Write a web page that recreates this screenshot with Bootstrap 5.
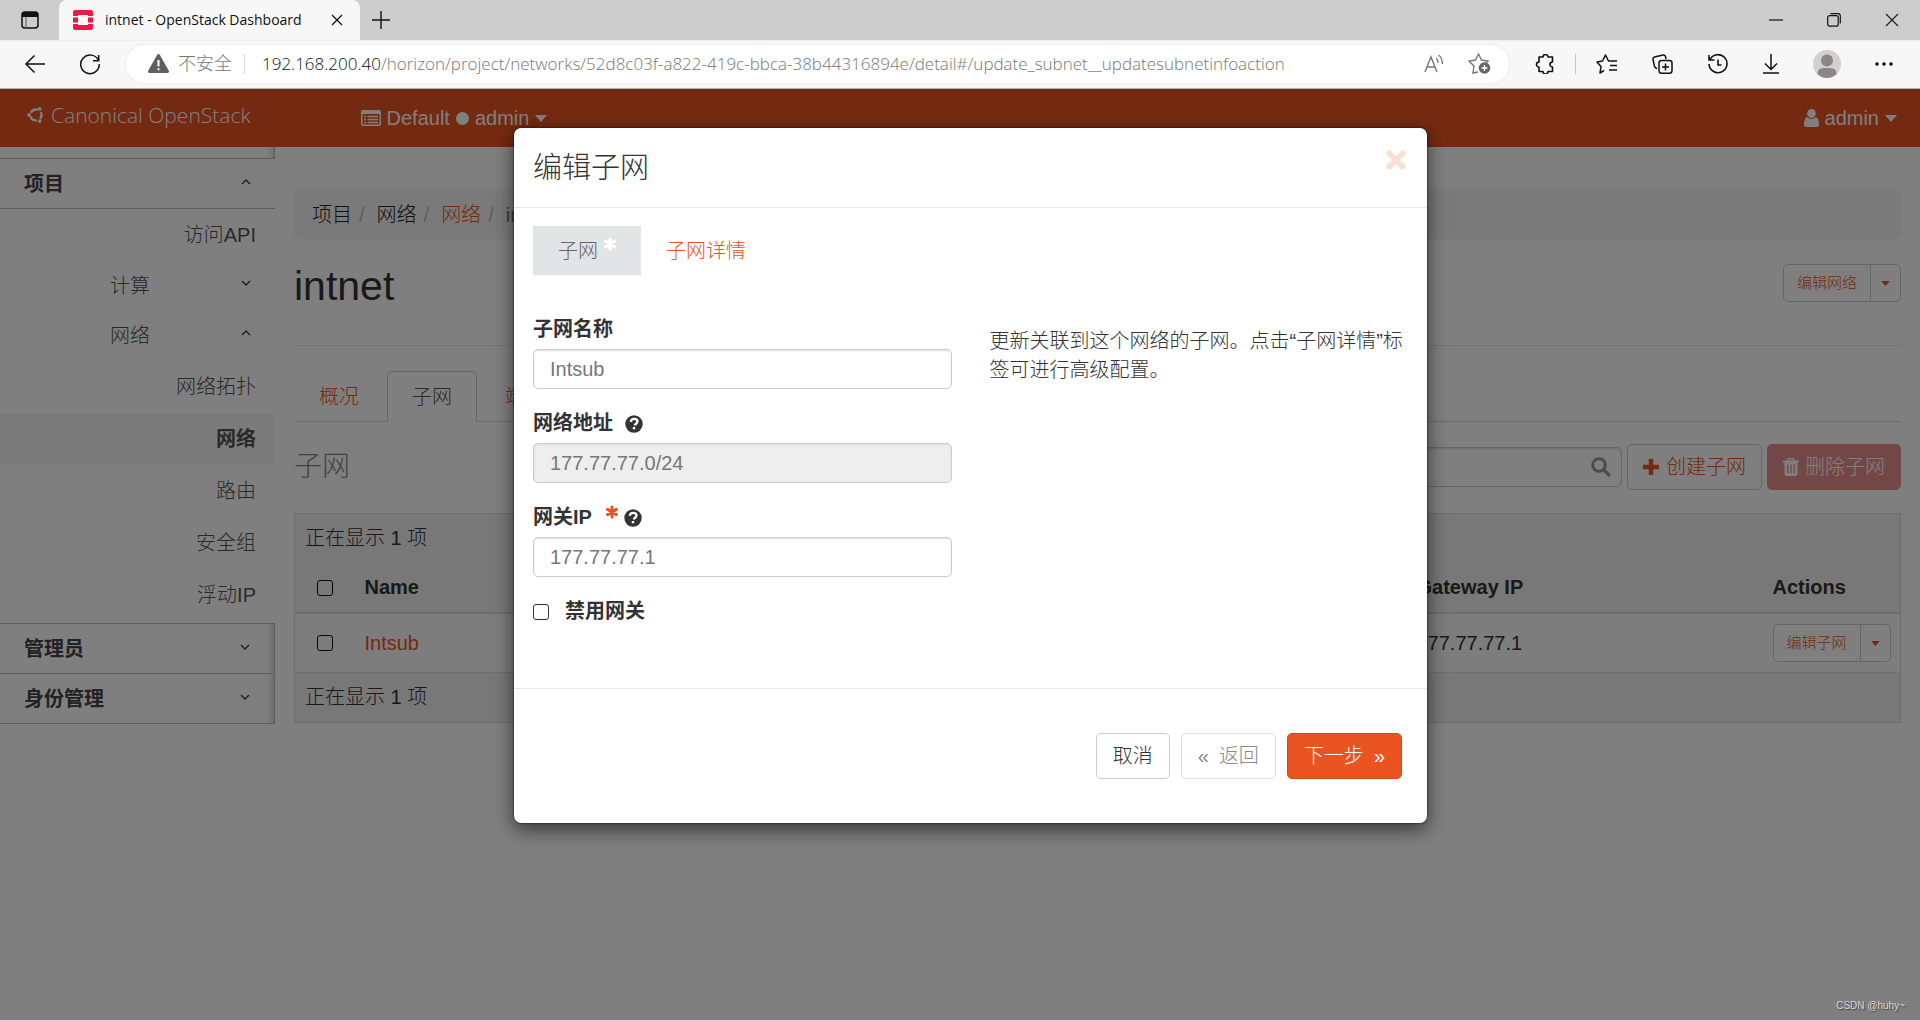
<!DOCTYPE html>
<html lang="zh-CN">
<head>
<meta charset="utf-8">
<meta name="viewport" content="width=device-width, initial-scale=1">
<title>intnet - OpenStack Dashboard</title>
<link href="https://cdn.jsdelivr.net/npm/bootstrap@5.3.0/dist/css/bootstrap.min.css" rel="stylesheet">
<style>
:root{--brand:#e95420;--line:#ccc}
html,body{height:100%}
body{font-family:"Liberation Sans","Noto Sans CJK SC",sans-serif;font-size:20px;line-height:29px;color:#333;font-weight:300;overflow:hidden}
a{text-decoration:none;color:var(--brand)}
svg{display:block;flex:none}
.ui-font{font-family:"Open Sans","Noto Sans CJK SC",sans-serif}
/* browser frame */
.tab-strip{background:#cdcdcd;height:40px}
.win-tab{background:#f7f7f7;width:301px;border-radius:8px 8px 0 0;font-size:14px;color:#111;font-weight:400;padding:0 15px 0 14px}
.win-tab span{padding-bottom:2px}
.frame-btn{border:0;background:none;padding:0;color:#111;display:flex}
.tab-menu{padding:0 20px 0 21px}
.win-controls{gap:44px;padding-right:21px}
.tool-row{background:#f7f7f7;height:49px;border-bottom:1px solid #b5b5b5;border-top:1px solid #eee;padding:0 27px 2px 24px}
.reload-btn{margin-left:33px}
.address{background:#fff;border-radius:19px;height:38px;margin-left:25px;padding:0 18px 0 22px;font-size:17px;color:#767676;box-shadow:0 0 3px #e4e4e4}
.insecure{font-size:18px;margin:0 12px 0 9px}
.address .vr{height:20px;margin-right:17px}
.star-plus{margin-left:24px}
.url b{font-weight:300;color:#111}
.tools{width:384px;padding-left:26px}
.tools .vr,.address .vr{align-self:center}
.tools .vr{height:20px}
.tools-lead{gap:20px}
/* dashboard */
.stage{border-bottom:1px solid #d5d8e2}
.top-nav{background:var(--brand);height:58px;color:#fff;padding:0 23px 0 27px}
.top-nav a{color:#fff}
.brand-text{font-size:21px;line-height:28px;padding-bottom:7px;gap:7px}
.project-pick{margin-left:110px;gap:6px}
.user-menu{gap:6px}
.side{width:275px;flex:none}
.side ul{padding-bottom:2px}
.side-head{height:49px;padding:2px 24px 0;font-weight:700;border-bottom:1px solid #bbb;color:#444;box-sizing:border-box;min-height:50px}
.side-head svg,.side-group svg{margin-bottom:6px}
.side-closed{border-right:1px solid #bbb;box-shadow:inset -7px 0 7px -5px #ccc}
.side-link{height:52px;display:flex;align-items:center;justify-content:flex-end;padding-right:19px;color:#555}
.side-link.current{background:#f6f6f6;font-weight:700}
.side-group{height:50px;padding:0 24px 0 110px;color:#555}
.side-top{height:12px;border-bottom:1px solid #bbb}
.side-rest{border-top:1px solid #bbb}
.main-col{padding:42px 19px 0}
.crumbs{background:#f5f5f5;border-radius:5px;height:50px;padding:2px 18px 0;color:#222}
.crumbs li+li::before{content:"/";color:#bbb;padding:0 12px 0 7px}
.page-title{font-size:41px;line-height:44px;color:#333;font-weight:400}
.title-row{height:107px;padding-top:25px;border-bottom:1px solid #e8e8e8}
.outline-btn{--bs-btn-font-weight:300;border:1px solid var(--line);color:var(--brand);background:#fff;border-radius:5px;font-size:20px;line-height:28px;padding:8px 15px;display:flex;align-items:center;gap:6px;white-space:nowrap}
.create-btn{gap:7px;margin:0 5px}
.small-btn{font-size:15px;line-height:22px;padding:7px 13px}
.small-btn.caret-btn{padding:7px 10px}
.page-tabs{margin-top:25px;border-color:#ddd}
.page-tabs .nav-link{color:var(--brand);padding:11px 24px 9px;line-height:29px;border-radius:5px 5px 0 0;margin-right:3px}
.page-tabs .nav-link.active{color:#555;border-color:#ccc #ccc #fff}
.list-title{font-size:28px;color:#888;line-height:40px}
.tools-row{margin-top:22px;height:46px}
.search-box{width:360px;height:40px;border:1px solid var(--line);border-radius:5px;padding:0 10px;box-shadow:inset 0 1px 2px #ddd}
.search-box input{border:0;outline:0;background:none}
.danger-btn{background:#e78f8c;border-color:#e78f8c;color:#fff}
.net-table{margin:23px 0 0;border:1px solid #ddd;table-layout:fixed;--bs-table-color:#333;color:#333;--bs-table-bg:transparent}
.net-table>:not(caption)>*>*{padding:10px;border-bottom:0;line-height:29px;vertical-align:middle}
.net-table thead,.net-table tfoot{background:#f0f0f0}
.net-table tbody{background:#fafafa;border-top:2px solid #ddd;border-bottom:1px solid #ddd}
.c-check{width:60px}.c-gate{width:356px}.c-act{width:138px}
.net-table .btn-group{display:flex;width:118px}
.box{width:16px;height:16px;margin:0;border:1px solid #333;border-radius:3px;display:block;flex:none;appearance:none;background:#fff}
.net-table .box{margin-left:12px;background:transparent;border-color:#111}
.shade{background:rgba(0,0,0,.5)}
/* dialog */
.dialog-layer{padding:39px 0 0 21px}
.dialog-box{background:#fff;width:913px;border:0;border-radius:7px;box-shadow:0 6px 20px rgba(0,0,0,.6),0 0 2px #000}
.dialog-head{height:80px;padding:0 21px 0 19px;border-bottom:1px solid #e5e5e5}
.dialog-head h2{font-size:29px;line-height:40px;font-weight:300;margin:0}
.dialog-main{padding:18px 19px 0;height:480px}
.step{height:49px;padding:1px 25px 0;display:flex;align-items:center;color:var(--brand)}
.step.on{background:#e2e4e6;color:#666;padding-right:24px;gap:5px}
.step svg{margin-bottom:14px;color:#fff}
.form-row{--bs-gutter-x:38px}
.left-col{padding-top:39px}
.left-col .group{margin-bottom:19px}
.left-col label{font-weight:700;line-height:31px;margin-bottom:4px}
.left-col .tick label{margin:0}
.help-gap{margin-left:12px}
.req{color:var(--brand);margin:0 5px 12px 13px}
.intro{padding-top:52px}
.field{height:40px;border:1px solid var(--line);border-radius:5px;padding:0 16px;color:#777;font-size:20px;box-shadow:inset 0 1px 2px #ddd;font-family:inherit}
.field:disabled{background:#eee}
.dialog-foot{border-top:1px solid #e5e5e5;padding:44px 25px;gap:11px}
.dialog-foot .outline-btn{color:#333;padding:8px 16px}
.dialog-foot .back-btn{color:#888;border-color:#ddd;gap:10px}
.dialog-foot .next-btn{background:var(--brand);border-color:#d9481a;color:#fff;gap:10px}
.watermark{right:15px;bottom:6px;font-size:10px;line-height:16px;color:#d8d8d8;text-shadow:1px 1px 1px #444}
</style>
</head>
<body class="d-flex flex-column">
<svg width="0" height="0" class="position-absolute" aria-hidden="true">
  <symbol id="up" viewBox="0 0 10 8"><path d="M1 6l4-4 4 4" fill="none" stroke="#444" stroke-width="1.5"/></symbol>
  <symbol id="down" viewBox="0 0 10 8"><path d="M1 2l4 4 4-4" fill="none" stroke="#444" stroke-width="1.5"/></symbol>
  <symbol id="caret" viewBox="0 0 12 7"><path d="M0 0h12L6 7z" fill="currentColor"/></symbol>
  <symbol id="star" viewBox="0 0 14 14"><path d="M7 2v10M2.500 4.400l9 5.200M11.500 4.400l-9 5.200" fill="none" stroke="currentColor" stroke-width="3" stroke-linecap="round"/></symbol>
  <symbol id="help" viewBox="0 0 18 18"><circle cx="9" cy="9" r="8.700" fill="#333"/><path d="M5.800 6.900C6 4.700 7.400 3.900 9.200 3.900c1.900 0 3.300 1.100 3.300 2.700 0 2.100-2.600 2.200-2.600 4" fill="none" stroke="#fff" stroke-width="2.300"/><path d="M7.800 12h2.400v2.300H7.800z" fill="#fff"/></symbol>
</svg>

<header class="ui-font">
  <div class="tab-strip d-flex align-items-stretch">
    <button class="frame-btn align-items-center tab-menu" aria-label="标签页菜单"><svg width="18" height="18" viewBox="0 0 18 18"><rect x="1" y="1" width="16" height="16" rx="3" fill="none" stroke="#111" stroke-width="1.500"/><path d="M1 6V3.500A2.500 2.500 0 0 1 3.500 1h11A2.500 2.500 0 0 1 17 3.500V6z" fill="#111"/><path d="M5 6v11" stroke="#555"/></svg></button>
    <div class="win-tab d-flex align-items-center">
      <svg width="20" height="20" viewBox="0 0 20 20"><path fill="#ed1944" d="M2 0h16a2 2 0 0 1 2 2v4h-5V5H5v1H0V2a2 2 0 0 1 2-2zM0 7.500h5v5H0zM15 7.500h5v5h-5zM0 14h5v1h10v-1h5v4a2 2 0 0 1-2 2H2a2 2 0 0 1-2-2z"/></svg>
      <span class="ms-2 ps-1 flex-fill text-nowrap">intnet - OpenStack Dashboard</span>
      <button class="frame-btn" aria-label="关闭标签页"><svg width="14" height="12" viewBox="0 0 14 12"><path d="M1 1l10 10M11 1L1 11" stroke="#111" stroke-width="1.300"/></svg></button>
    </div>
    <button class="frame-btn align-items-center ms-2 ps-1" aria-label="新标签页"><svg width="18" height="18" viewBox="0 0 18 18"><path d="M9 0v18M0 9h18" stroke="#111" stroke-width="1.400"/></svg></button>
    <div class="ms-auto d-flex align-items-center win-controls">
      <button class="frame-btn" aria-label="最小化"><svg width="14" height="14" viewBox="0 0 14 14"><path d="M0 7h14" stroke="#111" stroke-width="1.200"/></svg></button>
      <button class="frame-btn" aria-label="还原"><svg width="14" height="14" viewBox="0 0 14 14"><rect x=".7" y="2.700" width="10.500" height="10.500" rx="2" fill="none" stroke="#111" stroke-width="1.200"/><path d="M3.500 .7H11a2.300 2.300 0 0 1 2.300 2.300v7.500" fill="none" stroke="#111" stroke-width="1.200"/></svg></button>
      <button class="frame-btn" aria-label="关闭"><svg width="14" height="14" viewBox="0 0 14 14"><path d="M1 1l12 12M13 1L1 13" stroke="#222" stroke-width="1.200"/></svg></button>
    </div>
  </div>
  <div class="tool-row d-flex align-items-center">
    <button class="frame-btn" aria-label="后退"><svg width="22" height="20" viewBox="0 0 22 20"><path d="M21 10H2M10.500 1.500L2 10l8.500 8.500" fill="none" stroke="#111" stroke-width="1.500"/></svg></button>
    <button class="frame-btn reload-btn" aria-label="刷新"><svg width="22" height="22" viewBox="0 0 22 22"><path d="M19.500 7.500A9.300 9.300 0 1 0 20.300 11M19.700 2v5.700H14" fill="none" stroke="#111" stroke-width="1.500"/></svg></button>
    <div class="address d-flex align-items-center flex-fill">
      <svg width="21" height="19" viewBox="0 0 21 19"><path d="M10.500 0c.6 0 1 .3 1.300.8l9 16c.5 1-.1 2.200-1.300 2.200h-18C.3 19-.3 17.800.2 16.800l9-16c.3-.5.7-.8 1.300-.8z" fill="#5f5f5f"/><path d="M10.500 6v6.500M10.500 14.300v2" stroke="#fff" stroke-width="2"/></svg>
      <span class="insecure">不安全</span>
      <span class="vr"></span>
      <span class="flex-fill text-nowrap url"><b>192.168.200.40</b>/horizon/project/networks/52d8c03f-a822-419c-bbca-38b44316894e/detail#/update_subnet__updatesubnetinfoaction</span>
      <svg width="20" height="19" viewBox="0 0 20 19"><path d="M1 18L7 3l6 15M3 13h8" fill="none" stroke="#777" stroke-width="1.400"/><path d="M12 4q2 1.500 2 5M14.500 1q4 3 4 9" fill="none" stroke="#777" stroke-width="1.300"/></svg>
      <svg class="star-plus" width="23" height="21" viewBox="0 0 23 21"><path d="M10 19l-5 1 1-7-5-5 6.500-1L10.500 1l3 6 6.500 1-2 2" fill="none" stroke="#777" stroke-width="1.400"/><circle cx="16.500" cy="15" r="5.800" fill="#666"/><path d="M16.500 12v6M13.500 15h6" stroke="#fff" stroke-width="1.400"/></svg>
    </div>
    <div class="tools d-flex align-items-center justify-content-between">
      <div class="tools-lead d-flex align-items-center">
      <svg width="20" height="20" viewBox="0 0 20 20"><path d="M4 3h4a2.500 2.500 0 0 1 5 0h4.500v5a2.500 2.500 0 0 0 0 5v4.500H13a2.500 2.500 0 0 1-5 0H4V13a2.500 2.500 0 0 1 0-5z" fill="none" stroke="#111" stroke-width="1.600" stroke-linejoin="round"/></svg>
      <span class="vr"></span>
      <svg width="22" height="20" viewBox="0 0 22 20"><path d="M8 16.500L4 19l1-6.500L1 8l5.500-1L9.500 1l3 6H21M14 11.500h7M13 16h8" fill="none" stroke="#111" stroke-width="1.500" stroke-linejoin="round"/></svg>
      </div>
      <svg width="21" height="20" viewBox="0 0 21 20"><path d="M5 14.500q-2-.5-2.600-2.500L1 5.500Q.8 3.600 2.500 3L11 1q2-.2 2.500 1.500L14 5" fill="none" stroke="#111" stroke-width="1.500"/><rect x="7" y="6.500" width="13" height="12.800" rx="2.500" fill="none" stroke="#111" stroke-width="1.500"/><path d="M13.500 9.500v7M10 13h7" stroke="#111" stroke-width="1.500"/></svg>
      <svg width="22" height="20" viewBox="0 0 22 20"><path d="M3 5.500A9 9 0 1 1 2 10M2 1v5h5.500M11 5.500V11h3.500" fill="none" stroke="#111" stroke-width="1.600"/></svg>
      <svg width="16" height="20" viewBox="0 0 16 20"><path d="M8 0v15M2 9.500l6 6 6-6M0 19h16" fill="none" stroke="#111" stroke-width="1.500"/></svg>
      <svg width="28" height="28" viewBox="0 0 28 28"><circle cx="14" cy="14" r="14" fill="#d3d1cf"/><circle cx="14" cy="10.500" r="6" fill="#8a8785"/><path d="M4.500 24q0-6 6-6h7q6 0 6 6-4 4-9.500 4t-9.500-4z" fill="#8a8785"/></svg>
      <svg width="18" height="4" viewBox="0 0 18 4"><circle cx="2" cy="2" r="1.700"/><circle cx="9" cy="2" r="1.700"/><circle cx="16" cy="2" r="1.700"/></svg>
    </div>
  </div>
</header>

<div class="stage position-relative flex-fill overflow-hidden">
  <nav class="top-nav d-flex align-items-center">
    <a href="#" class="d-flex align-items-center ui-font brand-text"><svg width="17" height="16" viewBox="0 0 17 16"><circle cx="9" cy="8" r="5.500" fill="none" stroke="#fff" stroke-width="2.400" stroke-dasharray="8 3.520" stroke-dashoffset="4"/><circle cx="2" cy="8" r="1.900" fill="#fff"/><circle cx="12.700" cy="1.900" r="1.900" fill="#fff"/><circle cx="12.700" cy="14.100" r="1.900" fill="#fff"/></svg>Canonical OpenStack</a>
    <a href="#" class="d-flex align-items-center project-pick"><svg width="20" height="16" viewBox="0 0 20 16"><path fill="#fff" fill-rule="evenodd" d="M2 0h16a2 2 0 0 1 2 2v12a2 2 0 0 1-2 2H2a2 2 0 0 1-2-2V2a2 2 0 0 1 2-2zM1.500 4v10.500h17V4z"/><path d="M3 6.500h2M3 9.500h2M3 12.500h2M6.500 6.500H17M6.500 9.500H17M6.500 12.500H17" stroke="#fff" stroke-width="1.500"/></svg>Default<svg width="13" height="13" viewBox="0 0 13 13"><circle cx="6.500" cy="6.500" r="6.500" fill="#fff"/></svg>admin<svg width="12" height="7"><use href="#caret"/></svg></a>
    <a href="#" class="d-flex align-items-center ms-auto user-menu"><svg width="15" height="18" viewBox="0 0 15 18"><ellipse cx="7.500" cy="4.600" rx="4.300" ry="4.600" fill="#fff"/><path d="M3 8q4.500 4 9 0 3 1.500 3 7.500 0 2.500-2.500 2.500h-10Q0 18 0 15.500 0 9.500 3 8z" fill="#fff"/></svg>admin<svg width="12" height="7"><use href="#caret"/></svg></a>
  </nav>

  <div class="d-flex align-items-start">
    <aside class="side">
      <div class="side-top side-closed"></div>
      <div class="side-head d-flex align-items-center justify-content-between"><span>项目</span><svg width="10" height="8"><use href="#up"/></svg></div>
      <ul class="list-unstyled m-0">
        <li><a href="#" class="side-link">访问API</a></li>
        <li><a href="#" class="side-group d-flex align-items-center justify-content-between">计算<svg width="10" height="8"><use href="#down"/></svg></a></li>
        <li><a href="#" class="side-group d-flex align-items-center justify-content-between">网络<svg width="10" height="8"><use href="#up"/></svg></a></li>
        <li><a href="#" class="side-link">网络拓扑</a></li>
        <li><a href="#" class="side-link current">网络</a></li>
        <li><a href="#" class="side-link">路由</a></li>
        <li><a href="#" class="side-link">安全组</a></li>
        <li><a href="#" class="side-link">浮动IP</a></li>
      </ul>
      <div class="side-closed side-rest">
        <div class="side-head d-flex align-items-center justify-content-between"><span>管理员</span><svg width="10" height="8"><use href="#down"/></svg></div>
        <div class="side-head d-flex align-items-center justify-content-between"><span>身份管理</span><svg width="10" height="8"><use href="#down"/></svg></div>
      </div>
    </aside>

    <main class="main-col flex-fill">
      <ol class="crumbs list-unstyled d-flex align-items-center m-0"><li>项目</li><li>网络</li><li><a href="#">网络</a></li><li class="text-secondary">intnet</li></ol>
      <div class="title-row d-flex justify-content-between align-items-start">
        <h1 class="page-title m-0">intnet</h1>
        <div class="btn-group"><button class="btn outline-btn small-btn">编辑网络</button><button class="btn outline-btn small-btn caret-btn" aria-label="更多"><svg width="9" height="5" viewBox="0 0 12 7"><use href="#caret"/></svg></button></div>
      </div>
      <ul class="nav nav-tabs page-tabs">
        <li class="nav-item"><a class="nav-link" href="#">概况</a></li>
        <li class="nav-item"><a class="nav-link active" href="#">子网</a></li>
        <li class="nav-item"><a class="nav-link" href="#">端口</a></li>
      </ul>
      <div class="tools-row d-flex align-items-center">
        <span class="list-title me-auto">子网</span>
        <div class="search-box d-flex align-items-center"><input type="search" class="flex-fill" aria-label="过滤"><svg width="20" height="20" viewBox="0 0 20 20"><circle cx="8" cy="8" r="6.300" fill="none" stroke="#999" stroke-width="3"/><path d="M12.500 12.500l5.500 5.500" stroke="#999" stroke-width="3.200" stroke-linecap="round"/></svg></div>
        <button class="btn outline-btn create-btn"><svg width="16" height="16" viewBox="0 0 16 16"><path d="M8 0v16M0 8h16" stroke="currentColor" stroke-width="4.500"/></svg>创建子网</button>
        <button class="btn outline-btn danger-btn"><svg width="16" height="18" viewBox="0 0 16 18"><path fill="#fff" fill-rule="evenodd" d="M5 0h6l1 2.500h4v2h-1.500V16q0 2-2 2h-9q-2 0-2-2V4.500H0v-2h4zM5.700 1.400l-.4 1.100h5.400l-.4-1.100zM4.200 6.500v8.500h1.300V6.500zM7.400 6.500v8.500h1.300V6.500zM10.600 6.500v8.500h1.300V6.500z"/></svg>删除子网</button>
      </div>
      <table class="table net-table">
        <colgroup><col class="c-check"><col><col class="c-gate"><col class="c-act"></colgroup>
        <thead>
          <tr><td colspan="4">正在显示 1 项</td></tr>
          <tr><th><input type="checkbox" class="box" aria-label="全选"></th><th>Name</th><th>Gateway IP</th><th>Actions</th></tr>
        </thead>
        <tbody>
          <tr><td><input type="checkbox" class="box" aria-label="Intsub"></td><td><a href="#">Intsub</a></td><td>177.77.77.1</td><td><div class="btn-group"><button class="btn outline-btn small-btn">编辑子网</button><button class="btn outline-btn small-btn caret-btn" aria-label="更多"><svg width="9" height="5" viewBox="0 0 12 7"><use href="#caret"/></svg></button></div></td></tr>
        </tbody>
        <tfoot><tr><td colspan="4">正在显示 1 项</td></tr></tfoot>
      </table>
    </main>
  </div>

  <div class="shade position-absolute top-0 start-0 w-100 h-100"></div>

  <div class="dialog-layer position-absolute top-0 start-0 w-100 d-flex justify-content-center">
    <form class="modal-content dialog-box" role="dialog" aria-labelledby="dlg-title">
      <div class="dialog-head d-flex align-items-center justify-content-between">
        <h2 id="dlg-title">编辑子网</h2>
        <button type="button" class="frame-btn mb-3" aria-label="关闭"><svg width="20" height="20" viewBox="0 0 20 20"><path d="M3.500 3.500l13 13M16.500 3.500l-13 13" stroke="#fcdfd4" stroke-width="6" stroke-linecap="round"/></svg></button>
      </div>
      <div class="dialog-main">
        <div class="d-flex">
          <a href="#" class="step on">子网<svg width="14" height="14"><use href="#star"/></svg></a>
          <a href="#" class="step">子网详情</a>
        </div>
        <div class="row form-row">
          <div class="col-6 left-col">
            <div class="group"><label for="sn" class="d-block">子网名称</label><input id="sn" class="form-control field" value="Intsub"></div>
            <div class="group"><label for="na" class="d-flex align-items-center">网络地址<svg class="help-gap" width="18" height="18"><use href="#help"/></svg></label><input id="na" class="form-control field" value="177.77.77.0/24" disabled></div>
            <div class="group"><label for="gw" class="d-flex align-items-center">网关IP<svg class="req" width="14" height="14"><use href="#star"/></svg><svg width="18" height="18"><use href="#help"/></svg></label><input id="gw" class="form-control field" value="177.77.77.1"></div>
            <div class="tick d-flex align-items-center gap-3"><input id="dg" type="checkbox" class="box"><label for="dg">禁用网关</label></div>
          </div>
          <div class="col-6"><p class="intro m-0">更新关联到这个网络的子网。点击“子网详情”标签可进行高级配置。</p></div>
        </div>
      </div>
      <div class="dialog-foot d-flex justify-content-end">
        <button type="button" class="btn outline-btn">取消</button>
        <button type="button" class="btn outline-btn back-btn"><span>«</span>返回</button>
        <button type="submit" class="btn outline-btn next-btn">下一步<b>»</b></button>
      </div>
    </form>
  </div>
  <span class="watermark position-absolute">CSDN @huhy~</span>
</div>
<script src="https://cdn.jsdelivr.net/npm/bootstrap@5.3.0/dist/js/bootstrap.bundle.min.js"></script>
</body>
</html>
